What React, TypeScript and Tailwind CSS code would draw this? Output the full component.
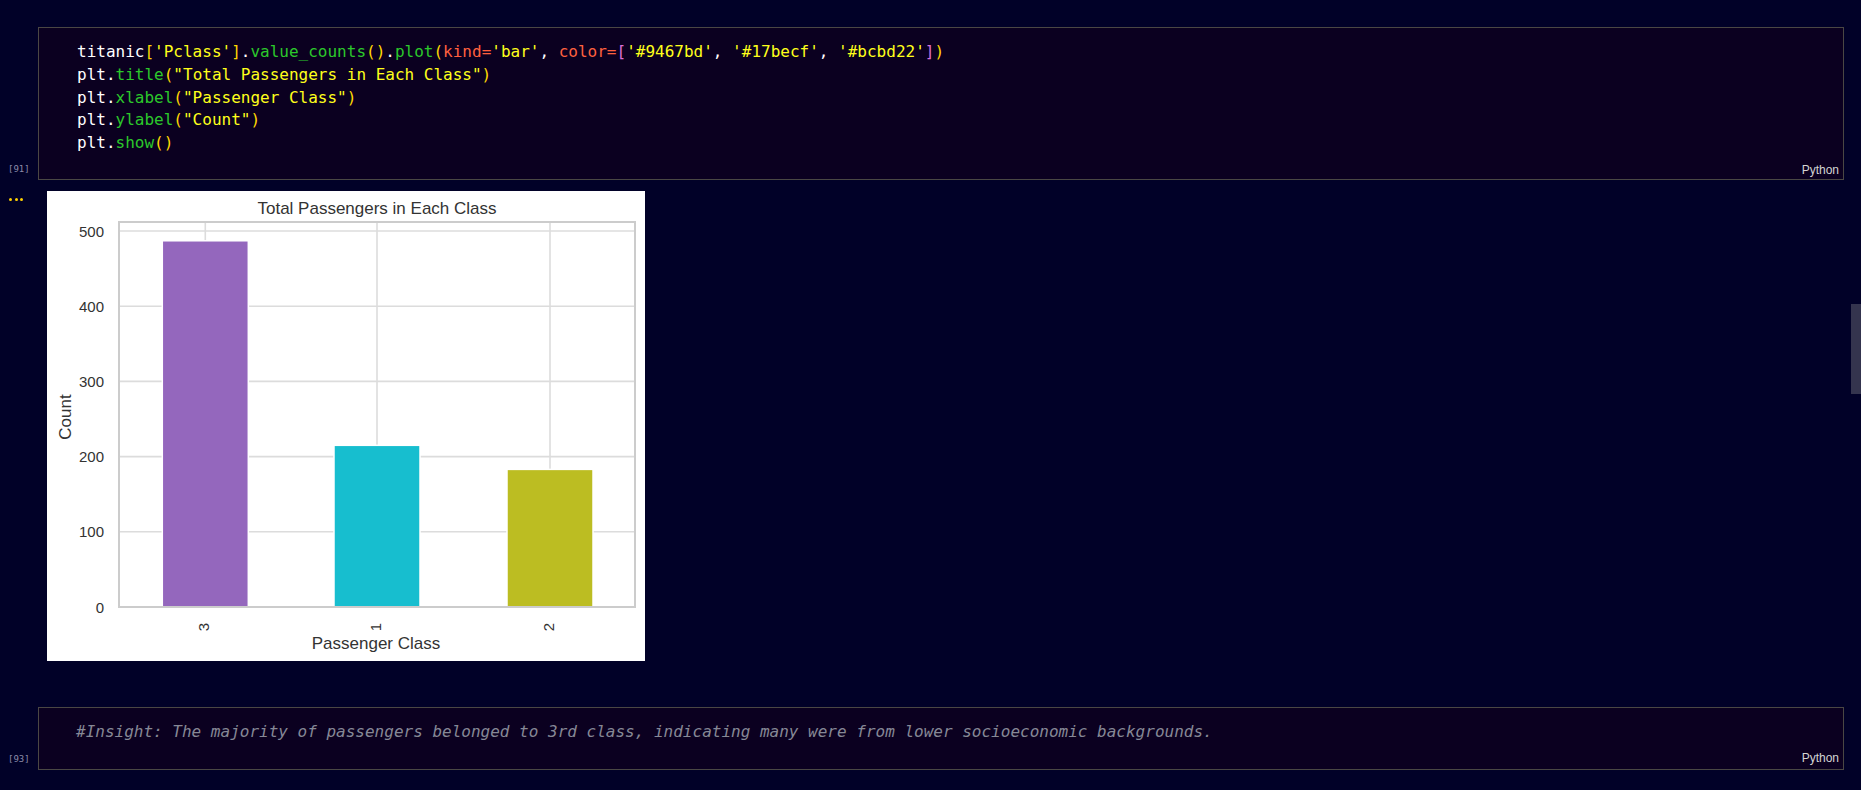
import React from 'react';

const mono = "font-['DejaVu_Sans_Mono','Liberation_Mono',monospace]";

type Tok = [string, string];

// token colours as in the editor theme
const W = 'text-white';
const B1 = 'text-[#ffd700]';
const B2 = 'text-[#da70d6]';
const STR = 'text-[#ffff1a]';
const FN = 'text-[#2bc82b]';
const KW = 'text-[#ff603f]';

const codeLines: Tok[][] = [
  [
    ['titanic', W], ['[', B1], ["'Pclass'", STR], [']', B1], ['.', W], ['value_counts', FN], ['()', B1],
    ['.', W], ['plot', FN], ['(', B1], ['kind=', KW], ["'bar'", STR], [', ', W], ['color=', KW], ['[', B2],
    ["'#9467bd'", STR], [', ', W], ["'#17becf'", STR], [', ', W], ["'#bcbd22'", STR], [']', B2], [')', B1],
  ],
  [['plt', W], ['.', W], ['title', FN], ['(', B1], ['"Total Passengers in Each Class"', STR], [')', B1]],
  [['plt', W], ['.', W], ['xlabel', FN], ['(', B1], ['"Passenger Class"', STR], [')', B1]],
  [['plt', W], ['.', W], ['ylabel', FN], ['(', B1], ['"Count"', STR], [')', B1]],
  [['plt', W], ['.', W], ['show', FN], ['()', B1]],
];

const bars = [
  { label: '3', value: 487, x: 158.3, color: '#9467bd' },
  { label: '1', value: 215, x: 330, color: '#17becf' },
  { label: '2', value: 183, x: 503, color: '#bcbd22' },
];

const yOf = (v: number) => 416 - v * 0.752;

function BarChart() {
  const font = "'Liberation Sans', Arial, sans-serif";
  return (
    <svg width={598} height={470} viewBox="0 0 598 470" className="block bg-white">
      {/* grid */}
      {[100, 200, 300, 400, 500].map((v) => (
        <line key={v} x1={72} x2={588} y1={yOf(v)} y2={yOf(v)} stroke="#dcdcdc" strokeWidth={1.6} />
      ))}
      {bars.map((b) => (
        <line key={b.label} x1={b.x} x2={b.x} y1={31} y2={416} stroke="#dcdcdc" strokeWidth={1.6} />
      ))}
      {/* bars */}
      {bars.map((b) => (
        <rect
          key={b.label}
          x={b.x - 43}
          y={yOf(b.value)}
          width={86}
          height={416 - yOf(b.value)}
          fill={b.color}
          stroke="#ffffff"
          strokeWidth={1.5}
        />
      ))}
      <rect x={72} y={31} width={516} height={385} fill="none" stroke="#cccccc" strokeWidth={2} />
      {/* y ticks */}
      {[0, 100, 200, 300, 400, 500].map((v) => (
        <text key={v} x={57} y={yOf(v)} textAnchor="end" dominantBaseline="central" fontSize={15} fill="#333" fontFamily={font}>
          {v}
        </text>
      ))}
      {/* x ticks */}
      {bars.map((b) => (
        <text
          key={b.label}
          transform={`translate(${b.x - 1.5} 436) rotate(-90)`}
          textAnchor="middle"
          dominantBaseline="central"
          fontSize={15}
          fill="#333"
          fontFamily={font}
        >
          {b.label}
        </text>
      ))}
      <text x={330} y={17} textAnchor="middle" dominantBaseline="central" fontSize={17} fill="#333" fontFamily={font}>
        Total Passengers in Each Class
      </text>
      <text x={329} y={452} textAnchor="middle" dominantBaseline="central" fontSize={17} fill="#333" fontFamily={font}>
        Passenger Class
      </text>
      <text transform="translate(18 226) rotate(-90)" textAnchor="middle" dominantBaseline="central" fontSize={17} fill="#333" fontFamily={font}>
        Count
      </text>
    </svg>
  );
}

function CellFooter({ pb }: { pb: string }) {
  return (
    <div className={`mt-auto flex justify-end pr-[4px] ${pb}`}>
      <span className="font-['Liberation_Sans',Arial,sans-serif] text-[12px] leading-[16px] text-[#d4d4d4]">Python</span>
    </div>
  );
}

export default function App() {
  return (
    <div className="relative h-[790px] w-full overflow-hidden bg-[#010128]">
      <div className="pt-[27px] pr-[17px]">
        {/* Code cell */}
        <div className="flex">
          <div className={`w-[38px] shrink-0 flex items-end pl-[8px] pb-[5px] ${mono} text-[9px] leading-[12px] text-[#8c8ca8]`}>
            [91]
          </div>
          <div className="flex-1 h-[153px] flex flex-col border border-[#4a4744] bg-[#0b0020]">
            <div className={`pl-[38px] pt-[13px] ${mono} text-[16px] leading-[22.75px] whitespace-pre`}>
              {codeLines.map((line, i) => (
                <div key={i}>
                  {line.map(([t, c], j) => (
                    <span key={j} className={c}>
                      {t}
                    </span>
                  ))}
                </div>
              ))}
            </div>
            <CellFooter pb="pb-[1px]" />
          </div>
        </div>

        {/* Output */}
        <div className="flex mt-[11px]">
          <div className="w-[47px] shrink-0 flex gap-[2.5px] pl-[9px] pt-[7px]">
            <span className="w-[3px] h-[3px] rounded-full bg-[#ffd000]" />
            <span className="w-[3px] h-[3px] rounded-full bg-[#ffd000]" />
            <span className="w-[3px] h-[3px] rounded-full bg-[#ffd000]" />
          </div>
          <BarChart />
        </div>

        {/* Comment cell */}
        <div className="flex mt-[46px]">
          <div className={`w-[38px] shrink-0 flex items-end pl-[8px] pb-[5px] ${mono} text-[9px] leading-[12px] text-[#8c8ca8]`}>
            [93]
          </div>
          <div className="flex-1 h-[63px] flex flex-col border border-[#4a4744] bg-[#0b0020]">
            <div className={`pl-[37px] pt-[13px] ${mono} text-[16px] leading-[22.75px] italic whitespace-pre text-[#868896]`}>
              #Insight: The majority of passengers belonged to 3rd class, indicating many were from lower socioeconomic backgrounds.
            </div>
            <CellFooter pb="pb-[3px]" />
          </div>
        </div>
      </div>

      {/* scrollbar thumb */}
      <div className="absolute right-0 top-[304px] w-[10px] h-[90px] bg-[#34344e]" />
    </div>
  );
}
